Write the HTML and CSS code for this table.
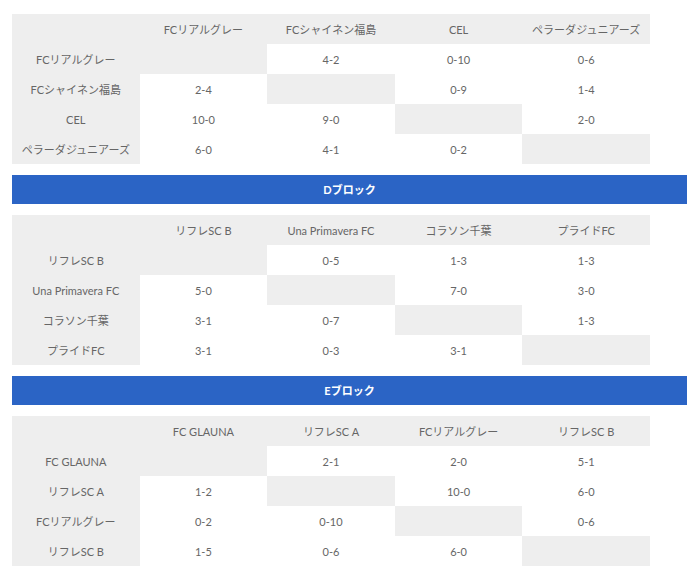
FILE: index.html
```html
<!DOCTYPE html>
<html lang="ja">
<head>
<meta charset="utf-8">
<link rel="stylesheet" href="styles.css">
</head>
<body>
<div class="page">
  <table class="league">
    <tr class="head"><th></th><th>FCリアルグレー</th><th>FCシャイネン福島</th><th>CEL</th><th>ペラーダジュニアーズ</th></tr>
    <tr><th>FCリアルグレー</th><td class="self"></td><td>4-2</td><td>0-10</td><td>0-6</td></tr>
    <tr><th>FCシャイネン福島</th><td>2-4</td><td class="self"></td><td>0-9</td><td>1-4</td></tr>
    <tr><th>CEL</th><td>10-0</td><td>9-0</td><td class="self"></td><td>2-0</td></tr>
    <tr><th>ペラーダジュニアーズ</th><td>6-0</td><td>4-1</td><td>0-2</td><td class="self"></td></tr>
  </table>

  <div class="block-title">Dブロック</div>

  <table class="league">
    <tr class="head"><th></th><th>リフレSC B</th><th>Una Primavera FC</th><th>コラソン千葉</th><th>プライドFC</th></tr>
    <tr><th>リフレSC B</th><td class="self"></td><td>0-5</td><td>1-3</td><td>1-3</td></tr>
    <tr><th>Una Primavera FC</th><td>5-0</td><td class="self"></td><td>7-0</td><td>3-0</td></tr>
    <tr><th>コラソン千葉</th><td>3-1</td><td>0-7</td><td class="self"></td><td>1-3</td></tr>
    <tr><th>プライドFC</th><td>3-1</td><td>0-3</td><td>3-1</td><td class="self"></td></tr>
  </table>

  <div class="block-title">Eブロック</div>

  <table class="league">
    <tr class="head"><th></th><th>FC GLAUNA</th><th>リフレSC A</th><th>FCリアルグレー</th><th>リフレSC B</th></tr>
    <tr><th>FC GLAUNA</th><td class="self"></td><td>2-1</td><td>2-0</td><td>5-1</td></tr>
    <tr><th>リフレSC A</th><td>1-2</td><td class="self"></td><td>10-0</td><td>6-0</td></tr>
    <tr><th>FCリアルグレー</th><td>0-2</td><td>0-10</td><td class="self"></td><td>0-6</td></tr>
    <tr><th>リフレSC B</th><td>1-5</td><td>0-6</td><td>6-0</td><td class="self"></td></tr>
  </table>
</div>
</body>
</html>
```

FILE: styles.css
```css
html, body {
  margin: 0;
  padding: 0;
  background: #ffffff;
}
body {
  font-family: Lato, "Noto Sans CJK JP", sans-serif;
  font-size: 11px;
  color: #666666;
}
.page {
  padding: 14px 7px 0 12px;
  width: 675px;
  display: flex;
  flex-direction: column;
  gap: 11px;
}
.league {
  width: 638px;
  border-collapse: collapse;
  table-layout: fixed;
}
.league th,
.league td {
  height: 30px;
  padding: 0;
  text-align: center;
  vertical-align: middle;
  font-weight: normal;
  white-space: nowrap;
}
.league th {
  background: #eeeeee;
}
.league td.self {
  background: #eeeeee;
}
.block-title {
  height: 29px;
  line-height: 29px;
  background: #2b64c5;
  color: #ffffff;
  font-weight: bold;
  text-align: center;
  font-size: 11px;
}
```
